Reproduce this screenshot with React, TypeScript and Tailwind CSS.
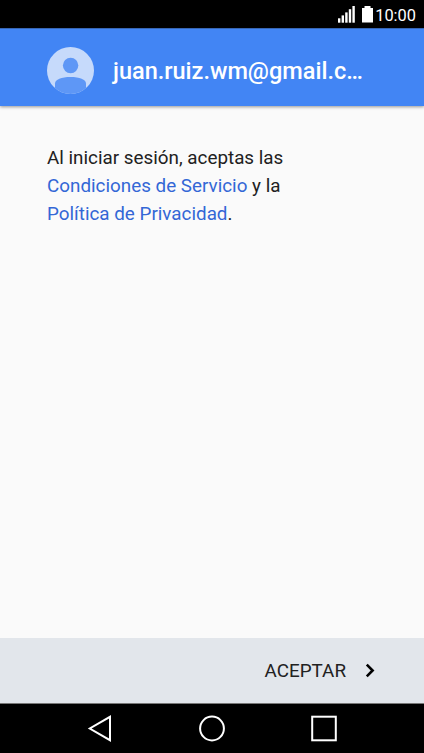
function StatusBar() {
  return (
    <div className="flex h-7 shrink-0 items-center justify-end bg-black pr-2 text-white">
      <svg width="17" height="17" viewBox="0 0 17 17" fill="currentColor" className="mr-[7px]">
        <rect x="0" y="12.3" width="2.4" height="4.4" />
        <rect x="3.6" y="9.4" width="2.4" height="7.3" />
        <rect x="7.2" y="6.4" width="2.4" height="10.3" />
        <rect x="10.8" y="3.2" width="2.4" height="13.5" />
        <rect x="14.4" y="0" width="2.4" height="16.7" />
      </svg>
      <svg width="11" height="17" viewBox="0 0 11 17" fill="currentColor" className="mr-[2.5px]">
        <path d="M2.5 0h6v2H11v14.5H0V2h2.5z" />
      </svg>
      <span className="pt-1 text-[16.4px] leading-none">10:00</span>
    </div>
  );
}

function Avatar() {
  return (
    <svg width="47" height="47" viewBox="0 0 47 47" className="shrink-0">
      <defs>
        <clipPath id="avatar">
          <circle cx="23.5" cy="23.5" r="23.5" />
        </clipPath>
      </defs>
      <circle cx="23.5" cy="23.5" r="23.5" fill="#c6dafb" />
      <circle cx="23.6" cy="18.5" r="7.7" fill="#5e97f6" />
      <path
        d="M8 47V36.5C8 32.5 14.5 30 23.5 30S39 32.5 39 36.5V47z"
        fill="#5e97f6"
        clipPath="url(#avatar)"
      />
    </svg>
  );
}

function Header({ email }: { email: string }) {
  return (
    <header className="z-10 flex h-[78px] shrink-0 items-center border-t border-[#3766b5] bg-[#4285f4] pt-1.5 pl-[47px] shadow-[0_1px_3px_rgba(0,0,0,0.4)]">
      <Avatar />
      <h1 className="ml-[19px] text-[23.5px] leading-8 font-medium whitespace-nowrap text-white">
        {email}
      </h1>
    </header>
  );
}

function NavigationBar() {
  return (
    <nav className="flex h-[50px] shrink-0 items-center justify-between border-t border-[#777] bg-black pr-[86px] pl-[87px]">
      <svg width="26" height="28" viewBox="0 0 26 28" fill="none" stroke="white" strokeWidth="2">
        <path d="M23 1.8v23.4L2.8 13.5z" />
      </svg>
      <svg width="28" height="28" viewBox="0 0 28 28" fill="none" stroke="white" strokeWidth="2">
        <circle cx="14" cy="13.5" r="11.9" />
      </svg>
      <svg width="28" height="28" viewBox="0 0 28 28" fill="none" stroke="white" strokeWidth="2">
        <rect x="2.2" y="1.7" width="23.6" height="23.6" />
      </svg>
    </nav>
  );
}

export default function App() {
  return (
    <div className="flex h-screen flex-col bg-[#fafafa] font-['Roboto',sans-serif]">
      <StatusBar />
      <Header email="juan.ruiz.wm@gmail.c…" />
      <main className="flex-1 px-[47px] pt-[38px] text-[18.84px] leading-7 text-[#212121]">
        <p>
          Al iniciar sesión, aceptas las
          <br />
          <a className="text-[#3367d6]">Condiciones de Servicio</a> y la
          <br />
          <a className="text-[#3367d6]">Política de Privacidad</a>.
        </p>
      </main>
      <footer className="flex h-[65px] shrink-0 items-center justify-end bg-[#e2e6eb] pr-[49px]">
        <button className="flex items-center text-[18.84px] text-[#212121]">
          <span className="pt-0.5">ACEPTAR</span>
          <svg
            width="10"
            height="15"
            viewBox="0 0 10 15"
            fill="none"
            stroke="black"
            strokeWidth="2.6"
            className="ml-[19px]"
          >
            <path d="M1.8 1.7l5.8 5.8-5.8 5.8" />
          </svg>
        </button>
      </footer>
      <NavigationBar />
    </div>
  );
}
